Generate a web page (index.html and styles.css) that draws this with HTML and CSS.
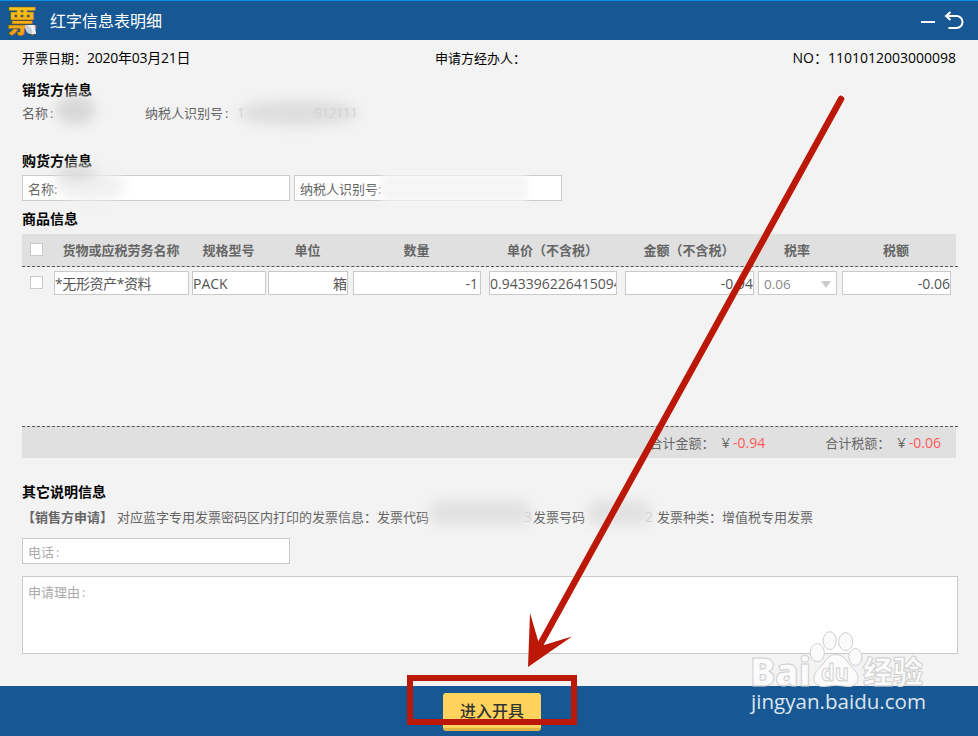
FILE: index.html
```html
<!DOCTYPE html>
<html lang="zh-CN">
<head>
    <meta charset="UTF-8">
    <title>红字信息表明细</title>
    <link rel="stylesheet" href="styles.css">
</head>
<body>
<div class="window">
    <div class="header">
        <svg class="logo" width="32" height="32" viewBox="0 0 32 32">
            <defs>
                <linearGradient id="gold" x1="0" y1="0" x2="0" y2="1">
                    <stop offset="0" stop-color="#ffd51c"/>
                    <stop offset="1" stop-color="#f59312"/>
                </linearGradient>
            </defs>
            <text x="1" y="27" class="logo-text" fill="url(#gold)">票</text>
            <path d="M19 20h10l1 9h-5c-3 0-6-2-6-9z" fill="#c3ccd8"/>
            <path d="M21 20h7l2 9h-4c1-4-1-7-5-9z" fill="#eef2f7"/>
        </svg>
        <h1>红字信息表明细</h1>
        <svg class="tools" width="46" height="24" viewBox="0 0 46 24">
            <path d="M2 13h14" stroke="#fff" stroke-width="2"/>
            <path d="M28 7h9.500a5.500 5.500 0 0 1 0 12h-8" fill="none" stroke="#fff" stroke-width="2"/>
            <path d="M31.500 3l-4.500 4 4.500 4" fill="none" stroke="#fff" stroke-width="2"/>
        </svg>
    </div>

    <div class="main">
        <div class="info">
            <span class="date"><span class="lbl">开票日期：</span>2020年03月21日</span>
            <span class="agent">申请方经办人：</span>
            <span class="no">NO：1101012003000098</span>
        </div>

        <h2>销货方信息</h2>
        <div class="seller">
            <span class="seller-name">名称<b class="colon">:</b></span>
            <span class="seller-tax">纳税人识别号<b class="colon">:</b></span>
            <i class="smudge s1"></i>
            <i class="smudge s2"></i>
            <span class="faint first">1</span>
            <span class="faint">912111</span>
        </div>

        <h2>购货方信息</h2>
        <div class="buyer">
            <div class="field">名称:</div>
            <div class="field">纳税人识别号:</div>
            <i class="smudge s3"></i>
            <i class="smudge s4"></i>
            <i class="smudge s5"></i>
        </div>

        <h2 class="goods-title">商品信息</h2>
        <div class="goods">
            <div class="cols thead">
                <i class="check"></i>
                <span>货物或应税劳务名称</span>
                <span>规格型号</span>
                <span>单位</span>
                <span>数量</span>
                <span>单价（不含税）</span>
                <span>金额（不含税）</span>
                <span>税率</span>
                <span>税额</span>
            </div>
            <div class="cols row">
                <i class="check"></i>
                <div class="cell name">*无形资产*资料</div>
                <div class="cell">PACK</div>
                <div class="cell num">箱</div>
                <div class="cell num minus">-1</div>
                <div class="cell">0.943396226415094</div>
                <div class="cell num">-0.94</div>
                <div class="cell rate">0.06<i class="caret"></i></div>
                <div class="cell num">-0.06</div>
            </div>
        </div>
        <div class="total">
            <span class="sum">合计金额：<b>¥</b><em>-0.94</em></span>
            <span class="tax">合计税额：<b>¥</b><em>-0.06</em></span>
        </div>

        <h2>其它说明信息</h2>
        <div class="apply">
            <strong>【销售方申请】</strong>
            <span class="code">对应蓝字专用发票密码区内打印的发票信息：发票代码</span>
            <span class="number">发票号码</span>
            <span>发票种类：增值税专用发票</span>
            <i class="smudge s6"></i>
            <i class="smudge s7"></i>
            <span class="faint code-end">3</span>
            <span class="faint number-end">2</span>
        </div>
        <div class="field phone">电话<b class="colon">:</b></div>
        <div class="field reason">申请理由<b class="colon">:</b></div>
    </div>

    <div class="footer">
        <div class="btn">进入开具</div>
    </div>

    <!-- watermark and arrow lie over the page -->
    <svg class="overlay" width="978" height="736" viewBox="0 0 978 736">
        <g class="mark">
            <text x="750" y="686" class="mark-big" textLength="61" lengthAdjust="spacingAndGlyphs">Bai</text>
            <ellipse cx="817.300" cy="652.700" rx="7" ry="9"/>
            <ellipse cx="829.700" cy="640.700" rx="6.500" ry="9"/>
            <ellipse cx="845.700" cy="641.700" rx="7" ry="9"/>
            <ellipse cx="855.300" cy="657" rx="6.500" ry="8.500"/>
            <path d="M836 654.500c8 0 11 8 17 14 8 7 6 18-4 18-5 0-8-1-13-1s-8 1-13 1c-10 0-12-11-4-18 6-6 9-14 17-14z"/>
            <text x="821" y="681" class="mark-du" textLength="28" lengthAdjust="spacingAndGlyphs">du</text>
            <text x="863" y="683" class="mark-cn" textLength="60" lengthAdjust="spacingAndGlyphs">经验</text>
        </g>
        <text x="751" y="709" class="mark-url" textLength="175" lengthAdjust="spacingAndGlyphs">jingyan.baidu.com</text>
        <path d="M841 99L541 643" stroke="#bc1808" stroke-width="6.500" stroke-linecap="round"/>
        <path d="M528 667L530 613 538.500 642 544 645 572 636.500z" fill="#bc1808"/>
        <rect x="410" y="678" width="164" height="44" fill="none" stroke="#bc1808" stroke-width="6"/>
    </svg>
</div>
</body>
</html>
```

FILE: styles.css
```css
* {
    padding: 0;
    margin: 0;
    box-sizing: border-box;
}

body {
    font-family: "Open Sans", "Noto Sans CJK SC", sans-serif;
    font-size: 13px;
    line-height: 20px;
    color: #666;
    background: #f3f3f3;
}

i, em {
    font-style: normal;
}

.window {
    position: relative;
    width: 978px;
    height: 736px;
    overflow: hidden;
    display: flex;
    flex-direction: column;
    white-space: nowrap;
}

.header {
    height: 40px;
    background: #175793;
    border-top: 1px solid #0491e8;
    display: flex;
    align-items: center;
    padding: 1px 13px 0 6px;
}

.logo {
    overflow: visible;
}

.logo-text {
    font-family: "Noto Sans CJK SC", sans-serif;
    font-weight: 900;
    font-size: 30px;
    stroke: #5a4a20;
    stroke-width: 0.4px;
}

.header h1 {
    margin-left: 12px;
    font-size: 16px;
    font-weight: normal;
    color: #fff;
}

.tools {
    margin-left: auto;
}

.main {
    height: 646px;
    padding: 8px 20px 0 22px;
}

.info {
    display: flex;
    color: #000;
    font-size: 14px;
    padding-right: 2px;
}

.date {
    width: 413px;
    letter-spacing: -0.25px;
}

.lbl, .agent {
    font-size: 13px;
    letter-spacing: 0;
}

.no {
    margin-left: auto;
}

.main h2 {
    font-size: 14px;
    line-height: 20px;
    color: #000;
}

.info + h2 {
    margin-top: 12px;
}

.seller {
    position: relative;
    display: flex;
    margin: 3px 0 28px;
}

.seller-name {
    width: 123px;
}

.seller-tax {
    width: 92px;
}

.colon {
    font-weight: normal;
    margin-left: 2px;
}

.buyer {
    position: relative;
    display: flex;
    gap: 4px;
    margin-top: 4px;
}

.field {
    width: 268px;
    height: 26px;
    padding: 3px 5px;
    line-height: 20px;
    background: #fff;
    border: 1px solid #c9c9c9;
}

.main .goods-title {
    margin: 8px 0 5px;
}

.goods {
    height: 192px;
}

.cols {
    display: grid;
    grid-template-columns: 32px 135px 74px 80px 128px 128px 129px 79px 109px;
}

.thead {
    height: 33px;
    align-items: center;
    text-align: center;
    font-weight: bold;
    background: linear-gradient(90deg, #e0e0e0 934px, transparent 934px);
    border-bottom: 1px dashed #555;
}

.thead span {
    padding-right: 1px;
}

.cols > :nth-child(3) { margin-left: 3px; margin-right: -3px; }
.cols > :nth-child(4) { margin-left: 5px; margin-right: -5px; }
.cols > :nth-child(5) { margin-left: 10px; margin-right: -10px; }
.cols > :nth-child(6) { margin-left: 18px; margin-right: -18px; }
.cols > :nth-child(7) { margin-left: 26px; margin-right: -26px; }
.cols > :nth-child(8) { margin-left: 30px; margin-right: -30px; }
.cols > :nth-child(9) { margin-left: 35px; margin-right: -35px; }

.row {
    padding-top: 4px;
}

.check {
    width: 13px;
    height: 13px;
    margin-left: 8px;
    background: #fff;
    border: 1px solid #c9c9c9;
}

.thead .check {
    margin-top: -2px;
}

.row .check {
    margin-top: 5px;
}

.cell {
    height: 24px;
    line-height: 23px;
    font-size: 14px;
    color: #555;
    background: #fff;
    border: 1px solid #c9c9c9;
    overflow: hidden;
}

.name {
    letter-spacing: -0.4px;
}

.num {
    text-align: right;
}

.minus {
    padding-right: 2px;
}

.rate {
    display: flex;
    align-items: center;
    justify-content: space-between;
    padding: 2px 5px 0;
    color: #888;
    font-size: 13.5px;
}

.caret {
    border: 5px solid transparent;
    border-top: 7px solid #ccc;
    border-bottom: 0;
}

.total {
    height: 32px;
    display: flex;
    justify-content: flex-end;
    border-top: 1px dashed #555;
    background: linear-gradient(90deg, #e0e0e0 934px, transparent 934px);
    padding-right: 17px;
    line-height: 30px;
    gap: 60px;
}

.total b {
    font-weight: normal;
    font-size: 15px;
    margin: 0 3px 0 7px;
}

.total em {
    color: #ff5a5a;
    font-size: 14px;
}

.total + h2 {
    margin-top: 24px;
}

.apply {
    position: relative;
    display: flex;
    margin: 5px 0 11px;
}

.apply strong {
    width: 95px;
}

.code {
    width: 416px;
}

.number {
    width: 124px;
}

.phone, .reason {
    color: #aaa;
}

.reason {
    width: 936px;
    height: 78px;
    margin-top: 12px;
    padding-top: 5px;
}

.smudge {
    position: absolute;
    background: #d2d2d2;
    border-radius: 50%;
    filter: blur(6px);
}

.s1 { left: 34px; top: -8px; width: 39px; height: 30px; background: #d8d8d8; }
.s2 { left: 216px; top: -13px; width: 120px; height: 26px; margin-top: 10px; background: #dedede; }
.s3 { left: 32px; top: -4px; width: 72px; height: 30px; background: #f1f1f1; }
.s4 { left: 34px; top: -8px; width: 42px; height: 13px; background: #d8d8d8; }
.s5 { left: 358px; top: -2px; width: 148px; height: 30px; border-radius: 8px; background: #f6f6f6; filter: blur(4px); }
.s6 { left: 408px; top: -6px; width: 100px; height: 24px; border-radius: 10px; background: #e1e1e1; }
.s7 { left: 566px; top: -6px; width: 62px; height: 24px; border-radius: 10px; background: #e1e1e1; }

/* leftovers of the hidden numbers */
.faint {
    position: absolute;
    left: 292px;
    font-size: 14px;
    letter-spacing: -0.8px;
    color: #d4d4d4;
}

.faint.first { left: 215px; }
.faint.code-end { left: 502px; }
.faint.number-end { left: 623px; }

.footer {
    height: 50px;
    background: #175793;
    display: flex;
    justify-content: center;
    padding: 7px 0 0 6px;
}

.btn {
    width: 98px;
    height: 38px;
    line-height: 36px;
    text-align: center;
    font-size: 16px;
    font-weight: 500;
    color: #333;
    background: #ffd35c;
    border-bottom: 3px solid #dfb445;
    border-radius: 3px;
}

.overlay {
    position: absolute;
    left: 0;
    top: 0;
}

.mark {
    fill: #fbfbfb;
    stroke: #cfcfcf;
    stroke-width: 1px;
}

.mark-big {
    font-size: 39px;
    font-weight: 800;
}

.mark-du {
    font-size: 24px;
    font-weight: bold;
}

.mark-cn {
    font-size: 31px;
    font-weight: 900;
}

.mark-url {
    font-size: 20px;
    font-weight: 500;
    fill: #dce6ef;
}
```
